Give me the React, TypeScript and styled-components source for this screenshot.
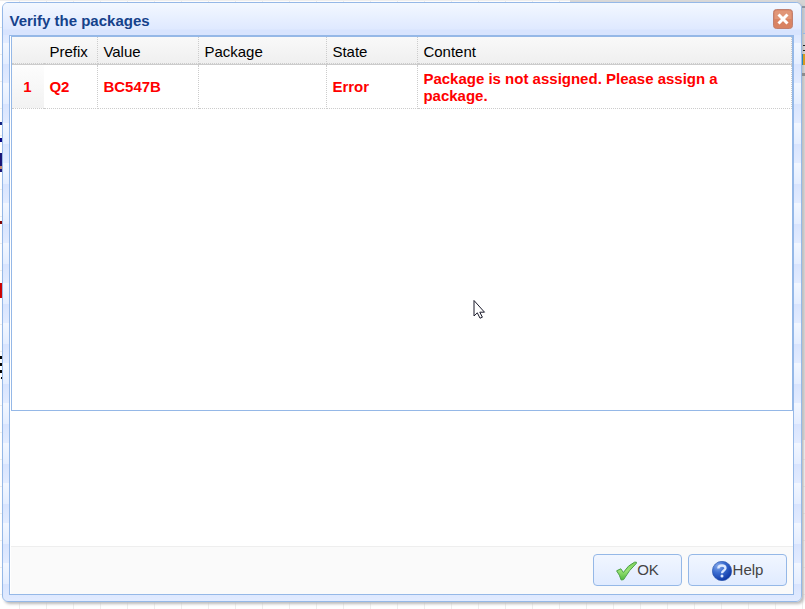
import React from "react";
import styled, { createGlobalStyle } from "styled-components";

const Global = createGlobalStyle`
  * { box-sizing: border-box; }
  html, body { margin: 0; overflow: hidden; }
  body { font-family: "Liberation Sans", Arial, sans-serif; font-size: 15px; color: #000; }
`;

const Canvas = styled.main`
  position: relative;
  width: 805px;
  height: 609px;
  padding: 2px;
  overflow: hidden;
  background-color: #fff;
  background-image:
    linear-gradient(90deg, #eee 1px, transparent 1px),
    linear-gradient(#eee 1px, transparent 1px);
  background-size: 27px 27px;
  background-position: 19px 0;
`;

const Speck = styled.i<{ $x: number; $y: number; $w: number; $h: number; $c: string }>`
  position: absolute;
  left: ${(p) => p.$x}px;
  top: ${(p) => p.$y}px;
  width: ${(p) => p.$w}px;
  height: ${(p) => p.$h}px;
  background: ${(p) => p.$c};
`;

const Dialog = styled.section`
  position: relative;
  display: flex;
  flex-direction: column;
  width: 800px;
  height: 600px;
  padding: 0 7px 6px 6px;
  border: 1px solid #95b8e7;
  border-radius: 6px;
  background: linear-gradient(#f2f7ff 0, #e4edff 21px, #d8e4fe 21px, #e3ecff 40px) 0 0 / 100% 40px;
  background-clip: padding-box;
  box-shadow: 2px 2px 3px #bbb;
`;

const Header = styled.header`
  display: flex;
  align-items: center;
  justify-content: space-between;
  flex: none;
  height: 32px;
  margin: 0 -7px 0 -6px;
  padding: 0 8px 0 6.5px;
  border-radius: 5px 5px 0 0;
  background: linear-gradient(#f3f8ff 0, #dfe9ff 26px, #d8e4fe 27px, #d8e4fe);
`;

const Title = styled.h1`
  margin: 4px 0 0;
  color: #15428b;
  font-size: 15px;
  line-height: 18px;
  font-weight: bold;
`;

const Close = styled.button`
  display: block;
  width: 20px;
  height: 20px;
  padding: 0;
  border: 0;
  background: none;
  svg { display: block; }
`;

const Body = styled.div`
  display: flex;
  flex: 1;
  flex-direction: column;
  border: 1px solid #95b8e7;
  background: #fff;
`;

const GridPanel = styled.div`
  height: 375px;
  margin-left: 1px;
  border: 1px solid #95b8e7;
`;

const Row = styled.div<{ $head?: boolean }>`
  display: grid;
  grid-template-columns: 32px 54px 101px 128px 91px 1fr;
  height: ${(p) => (p.$head ? 28 : 44)}px;
  background: ${(p) => (p.$head ? "linear-gradient(#f9f9f9, #efefef)" : "#fff")};
  border-bottom: ${(p) => (p.$head ? "1px solid #ccc" : "0")};
  color: ${(p) => (p.$head ? "#000" : "#f00")};
  font-weight: ${(p) => (p.$head ? "normal" : "bold")};
`;

const Cell = styled.div<{ $index?: boolean; $head?: boolean }>`
  display: flex;
  align-items: center;
  justify-content: ${(p) => (p.$index ? "center" : "flex-start")};
  padding: ${(p) => (p.$head ? 2 : 0)}px ${(p) => (p.$index ? 1 : 6)}px 0 ${(p) => (p.$index ? 0 : 5.4)}px;
  border-right: ${(p) => (p.$index ? "0" : "1px dotted #ccc")};
  border-bottom: 1px dotted #ccc;
  background: ${(p) => (p.$index && !p.$head ? "linear-gradient(#fdfdfd, #f2f2f2)" : "transparent")};
  line-height: 17px;
`;

const Footer = styled.footer`
  display: flex;
  justify-content: flex-end;
  gap: 6px;
  height: 48px;
  margin: auto 0 0 1px;
  padding: 7px 6px 0;
  border-top: 1px solid #eee;
  background: #fafafa;
`;

const Action = styled.button<{ $w: number }>`
  display: flex;
  align-items: center;
  justify-content: center;
  width: ${(p) => p.$w}px;
  height: 32px;
  padding: 0 0 1px;
  border: 1px solid #95b8e7;
  border-radius: 4px;
  background: linear-gradient(#f1f6ff, #e0ebff);
  color: #444;
  font: 15px "Liberation Sans", Arial, sans-serif;
  svg { flex: none; margin-top: 3px; }
`;

const Pointer = styled.svg`
  position: absolute;
  left: 473px;
  top: 299px;
`;

const specks: [number, number, number, number, string][] = [
  [0, 122, 2, 3, "#102080"],
  [0, 138, 2, 4, "#000080"],
  [0, 153, 2, 19, "#171275"],
  [0, 166, 2, 3, "#c98a70"],
  [0, 221, 2, 3, "#800000"],
  [0, 283, 2, 15, "#cc0000"],
  [0, 356, 2, 3, "#000"],
  [0, 363, 2, 3, "#000"],
  [0, 370, 2, 3, "#000"],
  [1, 377, 1, 2, "#000"],
  [570, 0, 235, 2, "#d8d8d8"],
  [797, 0, 8, 440, "#dedede"],
  [797, 0, 8, 7, "#d4d4d4"],
  [803, 7, 2, 26, "#c9d6e8"],
  [803, 33, 2, 40, "#e0e0e0"],
];

/* Slivers of the window underneath that show past the dialog's right edge. */
const edgeSpecks: [number, number, number, number, string][] = [
  [802, 6, 3, 2, "#8a929c"],
  [803, 33, 2, 1, "#95b8e7"],
  [803, 45, 2, 1, "#222"],
  [803, 50, 2, 1, "#222"],
  [803, 54, 2, 11, "#d69b20"],
  [802, 54, 1, 11, "#2a86b8"],
  [802, 73, 3, 3, "#8c8c8c"],
];

const head = ["", "Prefix", "Value", "Package", "State", "Content"];
const row = ["1", "Q2", "BC547B", "", "Error", "Package is not assigned. Please assign a package."];

function CloseIcon() {
  return (
    <svg width="20" height="20" viewBox="0 0 20 20">
      <rect x=".5" y=".5" width="19" height="19" rx="3" fill="#d98363" stroke="#c08070" />
      <path d="M1.500 10V4q0-2.500 2.500-2.500h12q2.500 0 2.500 2.500v6z" fill="#e8a58b" opacity=".55" />
      <path d="M5.500 5.500l9 9m0-9l-9 9" stroke="#fff" strokeWidth="3" />
    </svg>
  );
}

function CheckIcon() {
  return (
    <svg width="21" height="20" viewBox="0 0 21 20">
      <defs>
        <linearGradient id="leaf" x2="0" y2="1">
          <stop stopColor="#7fd35c" />
          <stop offset=".5" stopColor="#98e274" />
          <stop offset="1" stopColor="#4fb83c" />
        </linearGradient>
      </defs>
      <path
        d="M.6 9.800l4.200-2 2.600 3.700Q12 4 18.500 1.200h1.900v1.100Q13 9 7.600 18.600L5.200 19Q3.800 14 .6 9.800z"
        fill="url(#leaf)"
        stroke="#4ba045"
        strokeLinejoin="round"
      />
    </svg>
  );
}

function HelpIcon() {
  return (
    <svg width="21" height="20" viewBox="0 0 21 20">
      <defs>
        <radialGradient id="ball" cx=".3" cy=".25" r=".85">
          <stop stopColor="#86a9ea" />
          <stop offset=".4" stopColor="#3d6fd2" />
          <stop offset="1" stopColor="#08309f" />
        </radialGradient>
      </defs>
      <circle cx="10" cy="10" r="9.700" fill="url(#ball)" stroke="#2450a8" strokeWidth=".6" />
      <path
        d="M6.300 7.500Q6.500 4.500 10 4.500T13.500 7.300C13.500 9.400 10 9.600 10 12.200"
        fill="none"
        stroke="#dce8ff"
        strokeWidth="2.300"
      />
      <circle cx="10" cy="15.100" r="1.500" fill="#dce8ff" />
    </svg>
  );
}

export default function App() {
  return (
    <>
      <Global />
      <Canvas>
        {specks.map(([x, y, w, h, c]) => (
          <Speck key={`${x}-${y}-${h}`} $x={x} $y={y} $w={w} $h={h} $c={c} />
        ))}
        <Dialog>
          <Header>
            <Title>Verify the packages</Title>
            <Close aria-label="Close"><CloseIcon /></Close>
          </Header>
          <Body>
            <GridPanel>
              <Row $head>
                {head.map((t, i) => <Cell key={i} $head $index={i === 0}>{t}</Cell>)}
              </Row>
              <Row>
                {row.map((t, i) => <Cell key={i} $index={i === 0}>{t}</Cell>)}
              </Row>
            </GridPanel>
            <Footer>
              <Action $w={89}><CheckIcon />OK</Action>
              <Action $w={99}><HelpIcon />Help</Action>
            </Footer>
          </Body>
        </Dialog>
        {edgeSpecks.map(([x, y, w, h, c]) => (
          <Speck key={`${x}-${y}`} $x={x} $y={y} $w={w} $h={h} $c={c} />
        ))}
        <Pointer width="13" height="21" viewBox="0 0 13 21">
          <path d="M1 1.500V17l3.300-3.200L7 19.200l2.400-1-2.600-5h4.700z" fill="#fff" stroke="#1b1b2b" />
        </Pointer>
      </Canvas>
    </>
  );
}
